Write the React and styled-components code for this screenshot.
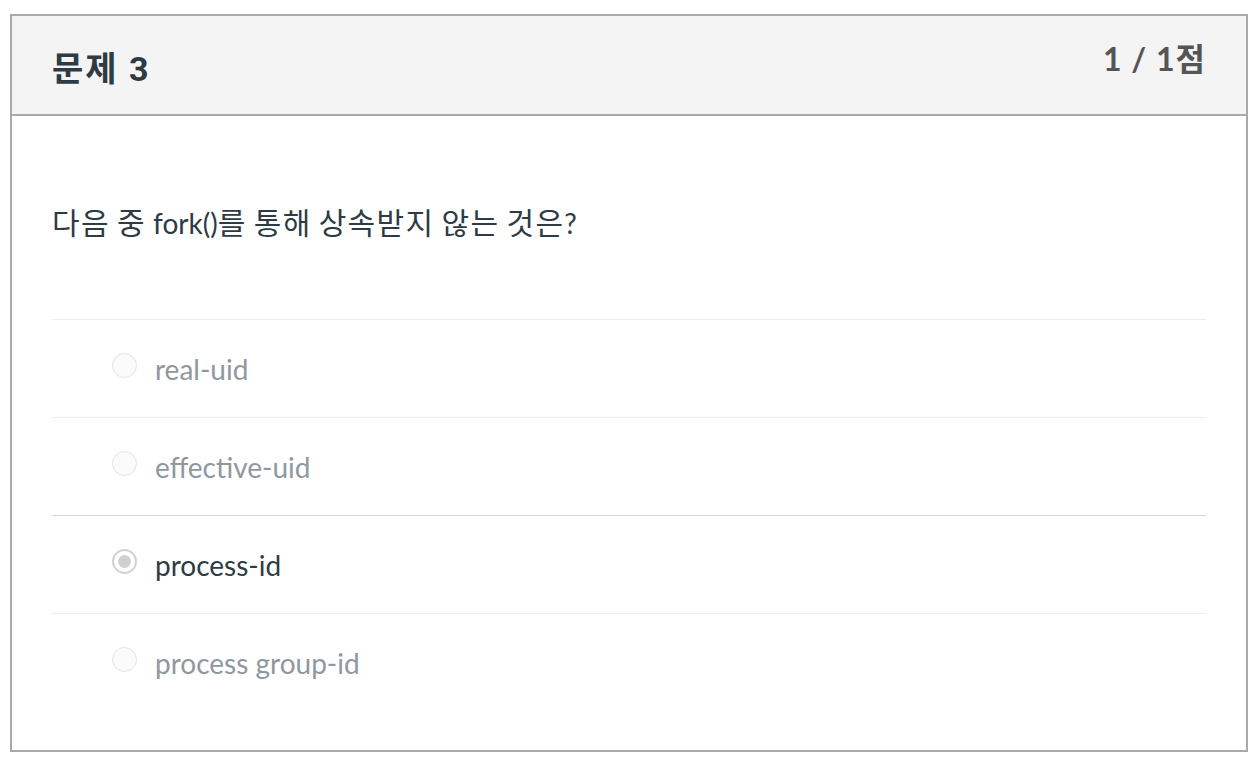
import React from "react";
import styled, { createGlobalStyle } from "styled-components";

const GlobalStyle = createGlobalStyle`
  html, body {
    margin: 0;
    padding: 0;
    background: #ffffff;
  }
  body {
    font-family: Lato, "Noto Sans CJK KR", sans-serif;
  }
`;

const Page = styled.div`
  padding: 14px 12px 12px 10px;
`;

const Card = styled.section`
  width: 1234px;
  border: 2px solid #a9a9a9;
  background: #fff;
`;

const Header = styled.header`
  display: flex;
  justify-content: space-between;
  align-items: flex-start;
  height: 98px;
  padding: 0 40px;
  background: #f4f4f4;
  border-bottom: 2px solid #a9a9a9;
`;

const Title = styled.h2`
  margin: 0;
  padding-top: 33px;
  font-size: 34px;
  font-weight: 700;
  line-height: 40px;
  letter-spacing: 2px;
  color: #2d3b45;
  font-family: Roboto, "Noto Sans CJK KR", sans-serif;
`;

const Points = styled.div`
  padding-top: 24px;
  font-size: 32px;
  font-weight: 700;
  line-height: 38px;
  letter-spacing: 1px;
  color: #555555;
`;

const Body = styled.div`
  padding: 90px 40px 39px;
`;

const Question = styled.p`
  margin: 0 0 81px;
  height: 32px;
  font-size: 28px;
  line-height: 32px;
  color: #2d3b45;
`;

// Korean glyphs render a bit wider in the original
const Ko = styled.span`
  font-size: 30px;
  letter-spacing: 1.3px;
`;

const Answer = styled.label`
  display: flex;
  align-items: center;
  height: 97px;
  padding-left: 60px;
  border-top: 1px solid ${(p) => (p.$selected ? "#d6d6d6" : "#ececec")};
`;

const Radio = styled.span`
  box-sizing: border-box;
  width: 25px;
  height: 25px;
  border-radius: 50%;
  flex-shrink: 0;
  margin-top: -6px;
  border: ${(p) => (p.$selected ? "2px solid #d2d2d2" : "1.5px solid #e4e4e4")};
  background: ${(p) => (p.$selected ? "#fff" : "#fbfbfb")};
  display: flex;
  align-items: center;
  justify-content: center;

  &::after {
    content: "";
    display: ${(p) => (p.$selected ? "block" : "none")};
    width: 13px;
    height: 13px;
    border-radius: 50%;
    background: #d0d0d0;
  }
`;

const AnswerText = styled.span`
  margin-left: 18px;
  font-size: 28px;
  line-height: 32px;
  color: ${(p) => (p.$selected ? "#2d3b45" : "#8f989f")};
`;

const answers = ["real-uid", "effective-uid", "process-id", "process group-id"];
const selected = 2;

function mixed(text) {
  return text.split(/([\uac00-\ud7a3]+)/).map((part, i) =>
    /[\uac00-\ud7a3]/.test(part) ? <Ko key={i}>{part}</Ko> : part
  );
}

export default function App() {
  return (
    <>
      <GlobalStyle />
      <Page>
        <Card>
          <Header>
            <Title>문제 3</Title>
            <Points>1 / 1점</Points>
          </Header>
          <Body>
            <Question>{mixed("다음 중 fork()를 통해 상속받지 않는 것은?")}</Question>
            {answers.map((a, i) => (
              <Answer key={a} $selected={i === selected}>
                <Radio $selected={i === selected} />
                <AnswerText $selected={i === selected}>{a}</AnswerText>
              </Answer>
            ))}
          </Body>
        </Card>
      </Page>
    </>
  );
}
